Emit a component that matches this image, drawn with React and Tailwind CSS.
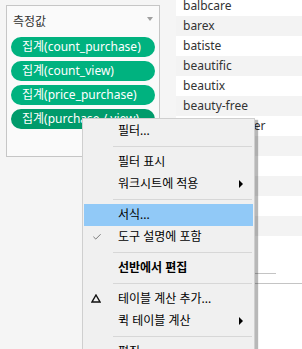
import { Check } from 'lucide-react';

const PILLS = [
  { label: '집계(count_purchase)', active: false },
  { label: '집계(count_view)', active: false },
  { label: '집계(price_purchase)', active: false },
  { label: '집계(purchase / view)', active: true },
];

// rows after beautyblender sit under the menu, so they carry no visible label
const BRANDS = [
  'balbcare', 'barex', 'batiste', 'beautific', 'beautix', 'beauty-free',
  'beautyblender', '', '', '', '', '', '',
];

const MENU = [
  { label: '필터...' },
  { sep: true },
  { label: '필터 표시' },
  { label: '워크시트에 적용', arrow: true },
  { sep: true },
  { label: '서식...', hover: true },
  { label: '도구 설명에 포함', icon: 'check' },
  { sep: true },
  { label: '선반에서 편집', bold: true },
  { sep: true },
  { label: '테이블 계산 추가...', icon: 'delta' },
  { label: '퀵 테이블 계산', arrow: true },
  { sep: true },
  { label: '편집...' },
];

const FONT = { fontFamily: '"Noto Sans", "Noto Sans CJK KR", sans-serif' };

function ContextMenu() {
  return (
    <div className="absolute left-[82px] top-[118px] w-[173px] h-[260px] bg-[#f0f0f0] border border-[#cfcfcf] pt-[1px] px-[1px] shadow-[3px_2px_1px_rgba(0,0,0,0.28)]">
      {MENU.map((item, i) => {
        if (item.sep) {
          return (
            <div key={i} className="h-[9px] flex items-center pl-[29px] pr-[1px]">
              <div className="h-px w-full bg-[#d7d7d7]" />
            </div>
          );
        }
        return (
          <div
            key={i}
            className={`relative h-[22px] flex items-center pl-[34px] text-[12px] text-black ${item.hover ? 'bg-[#91c9f7]' : ''} ${item.bold ? 'font-bold' : ''}`}
          >
            {item.icon === 'check' && (
              <Check className="absolute left-[8px] top-[6px] text-[#333]" size={10} strokeWidth={1.5} />
            )}
            {item.icon === 'delta' && (
              <svg className="absolute left-[7px] top-[6px]" width="10" height="9" viewBox="0 0 10 9">
                <path d="M5 1 L9 8 L1 8 Z" fill="none" stroke="#111" strokeWidth="1.4" strokeLinejoin="miter" />
              </svg>
            )}
            <span>{item.label}</span>
            {item.arrow && (
              <span className="absolute left-[155px] top-[7px] w-0 h-0 border-y-[4px] border-y-transparent border-l-[4px] border-l-black" />
            )}
          </div>
        );
      })}
    </div>
  );
}

export default function App() {
  return (
    <div className="relative w-[302px] h-[349px] overflow-hidden flex bg-[#f5f5f5]" style={FONT}>
      {/* Marks card */}
      <div className="w-[176px] shrink-0 pt-[5px] pl-[6px]">
        <div className="w-[154px] h-[152px] bg-[#fafafa] border border-[#c6c6c6] pl-[4px] pr-[4px]">
          <div className="flex items-center justify-between h-[31px] pl-[2px] pr-[2px]">
            <span className="text-[12px] text-[#333]">측정값</span>
            <span className="w-0 h-0 border-x-[3px] border-x-transparent border-t-[4px] border-t-[#a0a0a0] mt-[-6px]" />
          </div>
          <div className="flex flex-col gap-[4px]">
            {PILLS.map((p) => (
              <div
                key={p.label}
                className={`h-[20px] rounded-full flex items-center pl-[11px] text-white text-[12px] whitespace-nowrap overflow-hidden ${p.active ? 'bg-[#009b6b]' : 'bg-[#00b27f]'}`}
              >
                {p.label}
              </div>
            ))}
          </div>
        </div>
      </div>

      {/* Brand list */}
      <div className="flex-1 flex flex-col">
        <div className="mt-[-4px]">
          {BRANDS.map((b, i) => (
            <div
              key={i}
              className={`h-[20px] flex items-center pl-[7px] text-[12px] text-[#333] ${i % 2 === 1 ? 'bg-[#f3f3f3]' : 'bg-white'}`}
            >
              {b}
            </div>
          ))}
        </div>
        <div className="flex-1 bg-white flex flex-col">
          <div className="mt-[17px] h-px w-[100px] bg-[#c4c4c4]" />
          <div className="mt-[9px] h-px w-full bg-[#c4c4c4]" />
        </div>
      </div>

      <ContextMenu />
    </div>
  );
}
